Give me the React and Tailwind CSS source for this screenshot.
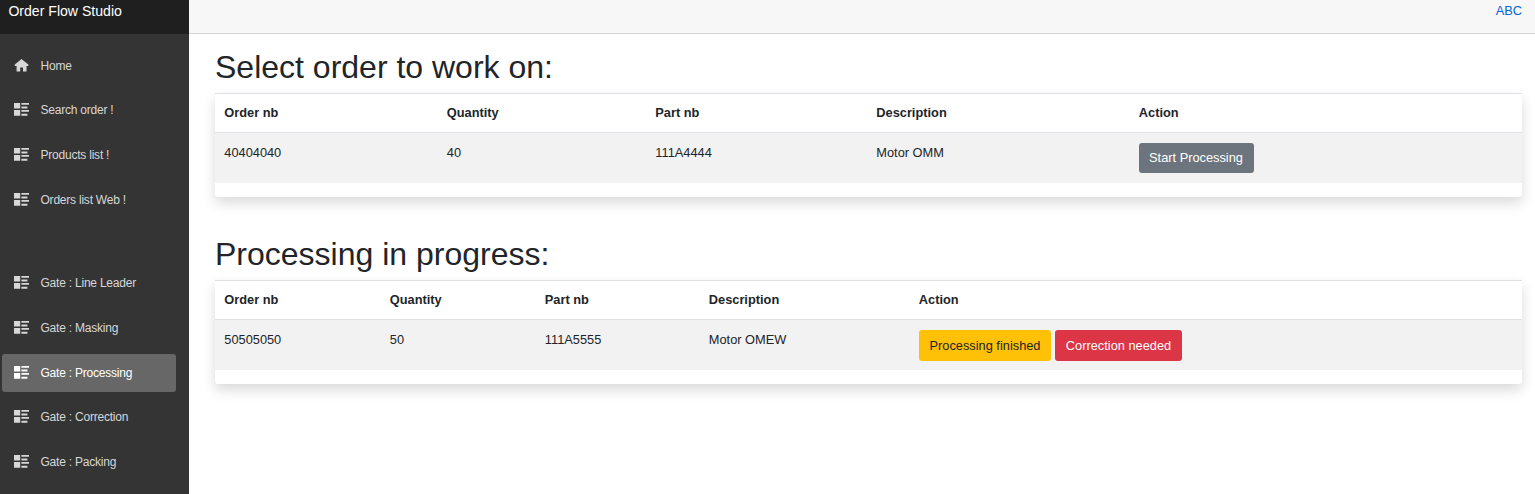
const HomeIcon = () => (
  <svg viewBox="0 0 15 14" className="h-[14px] w-[15px] shrink-0" fill="currentColor" aria-hidden="true">
    <path d="M7.5 0L0.8 5.4V7H2.6V12.5H6.2V8.6H9V12.5H12.5V7H14.3V5.4Z" />
  </svg>
);

const ListIcon = () => (
  <svg viewBox="0 0 15 14" className="h-[14px] w-[15px] shrink-0" fill="currentColor" aria-hidden="true">
    <path d="M0 0h6.2v5.6H0zM0 7h6.2v5.7H0zM7.4 0H15v1.8H7.4zM7.4 3.6h6v1.9h-6zM7.4 7H15v1.8H7.4zM7.4 10.8h6v1.9h-6z" />
  </svg>
);

const mainLinks = ["Home", "Search order !", "Products list !", "Orders list Web !"];
const gateLinks = ["Gate : Line Leader", "Gate : Masking", "Gate : Processing", "Gate : Correction", "Gate : Packing"];

function NavItem({ label, active }) {
  return (
    <li className="h-[44.7px]">
      <a
        href="#"
        className={`flex h-[38px] w-[174px] items-center gap-[11.5px] rounded-[3px] pl-3 text-[12px] tracking-[-0.22px] ${active ? "bg-[#676767] text-white" : "text-[#d7d7d7]"}`}
      >
        {label === "Home" ? <HomeIcon /> : <ListIcon />}
        <span>{label}</span>
      </a>
    </li>
  );
}

const buttonStyles = {
  gray: "bg-[#6c757d] text-white",
  yellow: "bg-[#ffc107] text-[#212529]",
  red: "bg-[#dc3545] text-white",
};

function OrderTable({ title, columns, headers, values, actions }) {
  return (
    <section className="h-[187.3px]">
      <h1 className="h-[45px] text-[32px] leading-[38px]">{title}</h1>
      <div className="h-[104px] rounded-[3px] bg-white text-[12.8px] leading-[19px] shadow-[0_6px_13px_rgba(0,0,0,0.15)]">
        <div className={`grid h-[40px] border-y border-[#dee2e6] pt-[9px] font-bold ${columns}`}>
          {headers.map((header) => (
            <div key={header} className="pl-[9.3px]">{header}</div>
          ))}
        </div>
        <div className={`grid h-[50px] bg-[#f2f2f2] pt-[10px] ${columns}`}>
          {values.map((value) => (
            <div key={value} className="pl-[9.3px]">{value}</div>
          ))}
          <div className="flex items-start gap-1 pl-[9.5px]">
            {actions.map((action) => (
              <button key={action.label} className={`rounded-[3px] text-center ${action.size} ${buttonStyles[action.tone]}`}>
                {action.label}
              </button>
            ))}
          </div>
        </div>
      </div>
    </section>
  );
}

const headers = ["Order nb", "Quantity", "Part nb", "Description", "Action"];

export default function App() {
  return (
    <div className="flex h-[494px] overflow-hidden bg-white font-['Liberation_Sans',Arial,sans-serif] text-[#212529]">
      <aside className="w-[189px] shrink-0 bg-[#343434]">
        <div className="h-[34px] bg-[#1f1f1f] pl-[8.4px] text-[14.08px] leading-[22px] text-white">Order Flow Studio</div>
        <nav className="pl-[2px] pt-[12.6px]">
          <ul>
            {mainLinks.map((label) => <NavItem key={label} label={label} />)}
          </ul>
          <ul className="pt-[39px]">
            {gateLinks.map((label) => <NavItem key={label} label={label} active={label === "Gate : Processing"} />)}
          </ul>
        </nav>
      </aside>
      <div className="min-w-0 flex-1">
        <header className="flex h-[34px] justify-end border-b border-[#d6d5d5] bg-[#f7f7f7] pr-[13px] text-[12.8px] leading-[21px]">
          <a href="#" className="text-[#0366d6]">ABC</a>
        </header>
        <main className="pl-[26px] pr-[13px] pt-[14px]">
          <OrderTable
            title="Select order to work on:"
            columns="grid-cols-[222.5px_208.5px_221px_262.5px_1fr]"
            headers={headers}
            values={["40404040", "40", "111A4444", "Motor OMM"]}
            actions={[{ label: "Start Processing", tone: "gray", size: "h-[30px] w-[115px] pb-px pr-px" }]}
          />
          <OrderTable
            title="Processing in progress:"
            columns="grid-cols-[165.5px_155px_164px_210px_1fr]"
            headers={headers}
            values={["50505050", "50", "111A5555", "Motor OMEW"]}
            actions={[
              { label: "Processing finished", tone: "yellow", size: "h-[31px] w-[132px]" },
              { label: "Correction needed", tone: "red", size: "h-[31px] w-[127px]" },
            ]}
          />
        </main>
      </div>
    </div>
  );
}
